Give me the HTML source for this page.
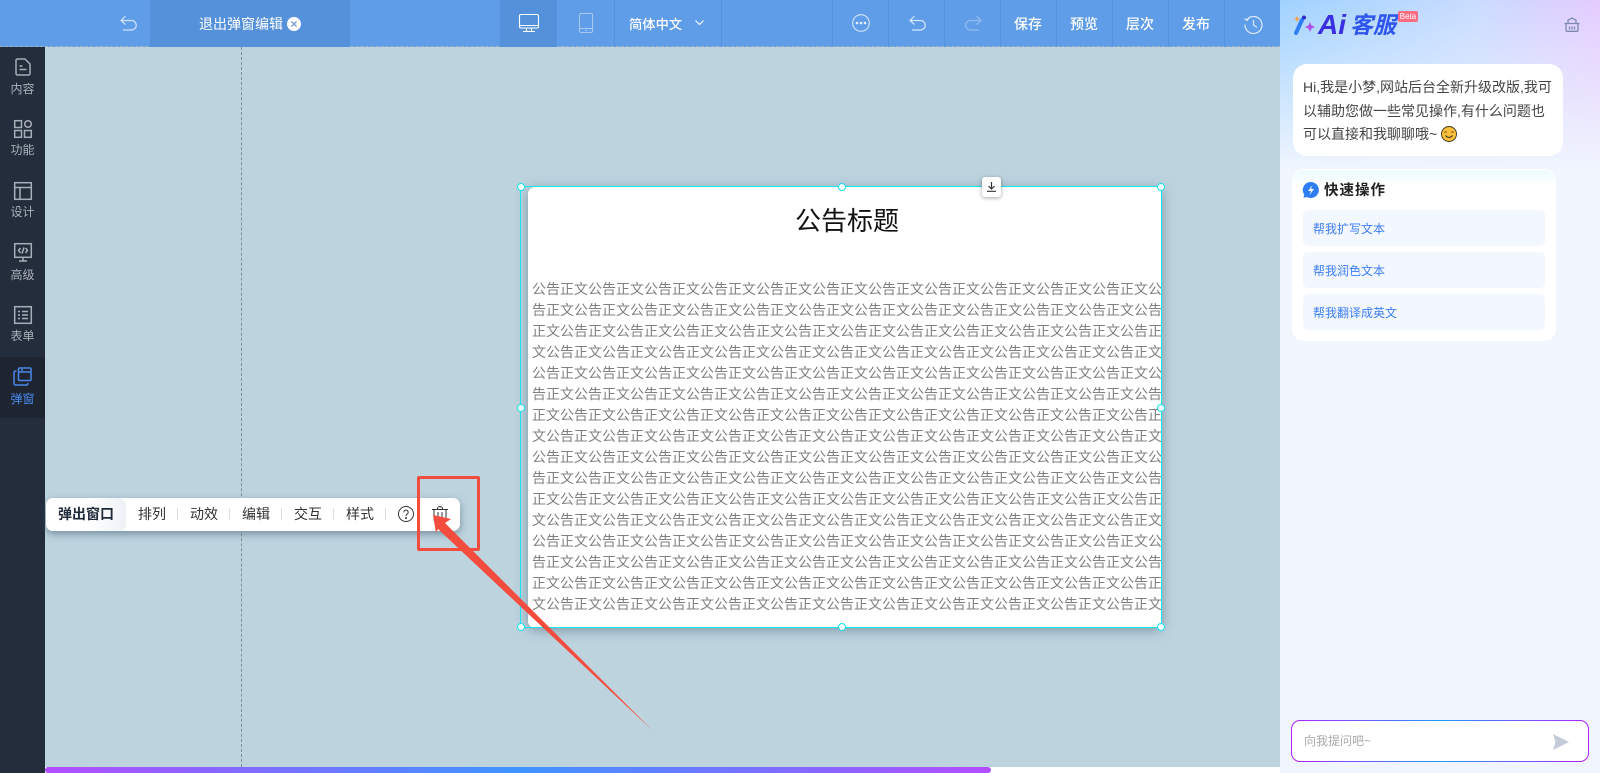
<!DOCTYPE html>
<html lang="zh"><head><meta charset="utf-8"><title>退出弹窗编辑</title>
<style>
*{box-sizing:border-box;margin:0;padding:0}
html,body{width:1600px;height:773px;overflow:hidden;background:#fff;font-family:"Liberation Sans","Noto Sans CJK SC",sans-serif}
.a{position:absolute}
.t{position:absolute;white-space:nowrap;text-align:center}
svg{position:absolute;overflow:visible}
#top{left:0;top:0;width:1280px;height:47px;background:#5f9de9}
.sep{position:absolute;top:0;width:1px;height:47px;background:#5592de}
.tb{top:16px;height:17px;line-height:17px;color:#fff;font-size:14px;width:56px;font-weight:500}
.side{color:#aab1ba;font-size:12px;left:0;width:45px;height:14px;line-height:14px}
.tool{font-size:14px;color:#333;top:504px;height:20px;line-height:20px;width:40px}
.ts{position:absolute;top:508px;width:1px;height:12px;background:#ddd}
.h{position:absolute;width:8px;height:8px;border-radius:50%;background:#fff;border:1px solid #16e0ee}
#body div{height:21px;line-height:21px;white-space:nowrap}
.qb{position:absolute;left:1303px;width:242px;height:36px;background:#f3f7fe;border-radius:5px;color:#3d7ef5;font-size:12px;line-height:38px;padding-left:10px}
</style></head><body>
<div class="a" style="left:0;top:0;width:1600px;height:773px;overflow:hidden">

<!-- canvas -->
<div class="a" style="left:45px;top:47px;width:1235px;height:720px;background:#bdd4df"></div>
<div class="a" style="left:241px;top:47px;width:0;height:720px;border-left:1px dashed #7d8f98"></div>
<div class="a" style="left:45px;top:767px;width:1235px;height:6px;background:#fff"></div>
<div class="a" style="left:45px;top:767px;width:946px;height:6px;border-radius:3px;background:linear-gradient(90deg,#b34dff,#3d94ff 50%,#b34dff)"></div>

<!-- top bar -->
<div class="a" id="top"></div>
<div class="a" style="left:0;top:46px;width:1280px;height:0;border-top:1px dashed #9fb2c0"></div>
<div class="a" style="left:150px;top:0;width:200px;height:47px;background:#5591db"></div>
<div class="a" style="left:500px;top:0;width:57px;height:47px;background:#5591db"></div>
<div class="sep" style="left:614px"></div><div class="sep" style="left:721px"></div><div class="sep" style="left:832px"></div>
<div class="sep" style="left:888px"></div><div class="sep" style="left:944px"></div><div class="sep" style="left:1000px"></div><div class="sep" style="left:1056px"></div><div class="sep" style="left:1112px"></div><div class="sep" style="left:1168px"></div><div class="sep" style="left:1224px"></div>

<svg style="left:120px;top:15px" width="17" height="17" viewBox="0 0 17 17" fill="none" stroke="#cfe2fa" stroke-width="1.2"><path d="M5.500 1 1 5.500l4.500 4M1 5.500h10.500a4.500 4.500 0 0 1 0 9.500H3"/></svg>
<div class="t" style="left:199px;top:15px;width:84px;height:19px;line-height:19px;color:#fff;font-size:14px">退出弹窗编辑</div>
<svg style="left:287px;top:17px" width="14" height="14" viewBox="0 0 14 14"><circle cx="7" cy="7" r="7" fill="#fff"/><path d="M4.500 4.500l5 5m0-5-5 5" stroke="#8aa9d6" stroke-width="1.600"/></svg>

<svg style="left:519px;top:14px" width="20" height="19" viewBox="0 0 20 19" fill="none" stroke="#fff" stroke-width="1.100"><rect x=".5" y=".5" width="19" height="13.500" rx="1.500"/><path d="M.5 11.500h19M7.500 14v3M12.500 14v3M4 17.500h12"/></svg>
<svg style="left:579px;top:13px" width="14" height="20" viewBox="0 0 14 20" fill="none" stroke="#a9c9f2" stroke-width="1"><rect x=".5" y=".5" width="13" height="19" rx="1.500"/><path d="M.5 15.500h13M6 17.500h2"/></svg>
<div class="t" style="left:629px;top:15px;width:53px;height:19px;line-height:19px;color:#fff;font-size:13.300px;font-weight:500">简体中文</div>
<svg style="left:695px;top:20px" width="9" height="6" viewBox="0 0 9 6" fill="none" stroke="#fff" stroke-width="1"><path d="M.5.500l4 4 4-4"/></svg>
<svg style="left:852px;top:14px" width="18" height="18" viewBox="0 0 18 18" fill="none"><circle cx="9" cy="9" r="8.300" stroke="#d5e5fa" stroke-width="1.100"/><circle cx="5" cy="9" r="1.300" fill="#e6f0fc"/><circle cx="9" cy="9" r="1.300" fill="#e6f0fc"/><circle cx="13" cy="9" r="1.300" fill="#e6f0fc"/></svg>
<svg style="left:909px;top:15px" width="17" height="17" viewBox="0 0 17 17" fill="none" stroke="#d5e5fa" stroke-width="1.200"><path d="M5.500 1 1 5.500l4.500 4M1 5.500h10.500a4.500 4.500 0 0 1 0 9.500H3"/></svg>
<svg style="left:965px;top:15px" width="17" height="17" viewBox="0 0 17 17" fill="none" stroke="#93bcee" stroke-width="1.200"><path d="M11.500 1 16 5.500l-4.500 4M16 5.500H5.500a4.500 4.500 0 0 0 0 9.500H14"/></svg>
<div class="t tb" style="left:1000px">保存</div><div class="t tb" style="left:1056px">预览</div><div class="t tb" style="left:1112px">层次</div><div class="t tb" style="left:1168px">发布</div>
<svg style="left:1244px;top:15px" width="19" height="19" viewBox="0 0 19 19" fill="none" stroke="#dfeafa" stroke-width="1.200"><path d="M3 4.500A8.500 8.500 0 1 1 1 9.500M.5 3.500 3 5.500l2-2.500M9.500 5v5l3.500 2.500"/></svg>

<!-- sidebar -->
<div class="a" style="left:0;top:47px;width:45px;height:726px;background:#232d3b"></div>
<div class="a" style="left:0;top:357px;width:45px;height:61px;background:#1e2531"></div>
<svg style="left:15px;top:58px" width="16" height="18" viewBox="0 0 16 18" fill="none" stroke="#a7aeb8" stroke-width="1.500"><path d="M1 2.500A1.500 1.500 0 0 1 2.500 1H10l5 5v9.500a1.500 1.500 0 0 1-1.500 1.500h-11A1.500 1.500 0 0 1 1 15.500zM4.500 8h3M4.500 11.500h7"/></svg>
<div class="t side" style="top:82px">内容</div>
<svg style="left:14px;top:120px" width="18" height="18" viewBox="0 0 18 18" fill="none" stroke="#a7aeb8" stroke-width="1.500"><rect x=".7" y=".7" width="6.800" height="6.800"/><circle cx="14" cy="4" r="3.300"/><rect x=".7" y="10.500" width="6.800" height="6.800"/><rect x="10.500" y="10.500" width="6.800" height="6.800"/></svg>
<div class="t side" style="top:143px">功能</div>
<svg style="left:14px;top:182px" width="18" height="18" viewBox="0 0 18 18" fill="none" stroke="#a7aeb8" stroke-width="1.500"><rect x=".7" y=".7" width="16.600" height="16.600"/><path d="M.7 5.500h16.600M6 5.500v11.800"/></svg>
<div class="t side" style="top:205px">设计</div>
<svg style="left:14px;top:243px" width="18" height="19" viewBox="0 0 18 19" fill="none" stroke="#a7aeb8" stroke-width="1.500"><rect x=".7" y=".7" width="16.600" height="13.600"/><path d="M9 14.500v3M5 18h8M6.500 5l-2 2.500 2 2.500M11.500 5l2 2.500-2 2.500M10 4.500 8 10.500"/></svg>
<div class="t side" style="top:268px">高级</div>
<svg style="left:14px;top:306px" width="18" height="18" viewBox="0 0 18 18" fill="none" stroke="#a7aeb8" stroke-width="1.500"><rect x=".7" y=".7" width="16.600" height="16.600"/><path d="M4 5.500h2M8 5.500h6M4 9h2M8 9h6M4 12.500h2M8 12.500h6"/></svg>
<div class="t side" style="top:329px">表单</div>
<svg style="left:13px;top:367px" width="19" height="19" viewBox="0 0 19 19" fill="none" stroke="#4a86e8" stroke-width="1.500"><rect x="5.500" y="1" width="12.500" height="12.500" rx="1"/><path d="M5.500 5h12.500M8 3h2M3.500 4H2.500A1.500 1.500 0 0 0 1 5.500v11A1.500 1.500 0 0 0 2.500 18h11a1.500 1.500 0 0 0 1.500-1.500V16"/></svg>
<div class="t side" style="top:392px;color:#4a8bf0">弹窗</div>

<!-- floating toolbar -->
<div class="a" style="left:46px;top:498px;width:414px;height:33px;background:#fff;border-radius:7px;box-shadow:0 3px 8px rgba(60,85,105,.55)"></div>
<div class="a" style="left:46px;top:498px;width:80px;height:33px;border-radius:7px;background:linear-gradient(90deg,#fff,#fff 55%,#edf1f6)"></div>
<div class="t tool" style="left:58px;width:56px;font-weight:700;color:#1f2a3a">弹出窗口</div>
<div class="t tool" style="left:132px">排列</div><div class="ts" style="left:177px"></div>
<div class="t tool" style="left:184px">动效</div><div class="ts" style="left:229px"></div>
<div class="t tool" style="left:236px">编辑</div><div class="ts" style="left:281px"></div>
<div class="t tool" style="left:288px">交互</div><div class="ts" style="left:333px"></div>
<div class="t tool" style="left:340px">样式</div><div class="ts" style="left:385px"></div>
<svg style="left:398px;top:506px" width="16" height="16" viewBox="0 0 16 16" fill="none" stroke="#333" stroke-width="1"><circle cx="8" cy="8" r="7.500"/><path d="M5.800 6.300a2.200 2.200 0 1 1 3.400 1.800C8.400 8.700 8 9 8 10"/><circle cx="8" cy="12" r=".5" fill="#333"/></svg>
<svg style="left:432px;top:506px" width="16" height="17" viewBox="0 0 16 17" fill="none" stroke="#333" stroke-width="1"><path d="M0 3.500h16M5.500 3.500V2.500a2.500 2 0 0 1 5 0v1M2 3.500v10a1.500 1.500 0 0 0 1.500 1.500h9a1.500 1.500 0 0 0 1.500-1.500v-10M6 6v6M10 6v6"/></svg>

<!-- popup -->
<div class="a" style="left:528px;top:187px;width:634px;height:441px;background:#fff;border-radius:7px;box-shadow:0 2px 12px rgba(60,85,105,.5);overflow:hidden">
 <div class="t" style="left:267px;top:16px;width:104px;height:36px;line-height:36px;font-size:26px;color:#111">公告标题</div>
 <div class="a" id="body" style="left:4px;top:92px;width:630px;height:336px;overflow:hidden;font-size:14px;color:#808080">
<div>公告正文公告正文公告正文公告正文公告正文公告正文公告正文公告正文公告正文公告正文公告正文公</div>
<div>告正文公告正文公告正文公告正文公告正文公告正文公告正文公告正文公告正文公告正文公告正文公告</div>
<div>正文公告正文公告正文公告正文公告正文公告正文公告正文公告正文公告正文公告正文公告正文公告正</div>
<div>文公告正文公告正文公告正文公告正文公告正文公告正文公告正文公告正文公告正文公告正文公告正文</div>
<div>公告正文公告正文公告正文公告正文公告正文公告正文公告正文公告正文公告正文公告正文公告正文公</div>
<div>告正文公告正文公告正文公告正文公告正文公告正文公告正文公告正文公告正文公告正文公告正文公告</div>
<div>正文公告正文公告正文公告正文公告正文公告正文公告正文公告正文公告正文公告正文公告正文公告正</div>
<div>文公告正文公告正文公告正文公告正文公告正文公告正文公告正文公告正文公告正文公告正文公告正文</div>
<div>公告正文公告正文公告正文公告正文公告正文公告正文公告正文公告正文公告正文公告正文公告正文公</div>
<div>告正文公告正文公告正文公告正文公告正文公告正文公告正文公告正文公告正文公告正文公告正文公告</div>
<div>正文公告正文公告正文公告正文公告正文公告正文公告正文公告正文公告正文公告正文公告正文公告正</div>
<div>文公告正文公告正文公告正文公告正文公告正文公告正文公告正文公告正文公告正文公告正文公告正文</div>
<div>公告正文公告正文公告正文公告正文公告正文公告正文公告正文公告正文公告正文公告正文公告正文公</div>
<div>告正文公告正文公告正文公告正文公告正文公告正文公告正文公告正文公告正文公告正文公告正文公告</div>
<div>正文公告正文公告正文公告正文公告正文公告正文公告正文公告正文公告正文公告正文公告正文公告正</div>
<div>文公告正文公告正文公告正文公告正文公告正文公告正文公告正文公告正文公告正文公告正文公告正文</div>
 </div>
</div>
<div class="a" style="left:520px;top:186px;width:642px;height:442px;border:1px solid #16e6f2"></div>
<div class="h" style="left:517px;top:183px"></div><div class="h" style="left:838px;top:183px"></div><div class="h" style="left:1157px;top:183px"></div>
<div class="h" style="left:517px;top:404px"></div><div class="h" style="left:1157px;top:404px"></div>
<div class="h" style="left:517px;top:623px"></div><div class="h" style="left:838px;top:623px"></div><div class="h" style="left:1157px;top:623px"></div>
<div class="a" style="left:982px;top:177px;width:19px;height:20px;background:#fff;border-radius:3px;box-shadow:0 1px 4px rgba(0,0,0,.35)"></div>
<svg style="left:987px;top:182px" width="9" height="10" viewBox="0 0 9 10" fill="none" stroke="#333" stroke-width="1.200"><path d="M4.500 0v6.500M1.500 4l3 3 3-3M0 9.300h9"/></svg>

<!-- annotation -->
<div class="a" style="left:417px;top:476px;width:63px;height:75px;border:3px solid #f44c3f;border-radius:2px"></div>
<svg style="left:0;top:0" width="1280" height="773"><path d="M433 515 451 519 445 523 653 731 438 529 436 533Z" fill="#f44c3f"/></svg>

<!-- AI panel -->
<div class="a" style="left:1280px;top:0;width:320px;height:773px;background:#f0f5fe"></div>
<div class="a" style="left:1280px;top:0;width:320px;height:170px;background:linear-gradient(180deg,rgba(240,245,254,0),#f0f5fe),linear-gradient(90deg,#9fd2ff,#c8dcff 60%,#e4cbff)"></div>
<svg style="left:1294px;top:15px" width="22" height="21" viewBox="0 0 22 21"><path d="M2 18 8 5" stroke="#2f7df5" stroke-width="4" stroke-linecap="round"/><circle cx="10" cy="2.500" r="2" fill="#2a2ad0"/><path d="M3 1l1 2 2 1-2 1-1 2-1-2-2-1 2-1z" fill="#f5a04a"/><path d="M16 7l1.300 3.200L21 12l-3.700 1.800L16 17l-1.300-3.200L11 12l3.700-1.800z" fill="#b04de8"/></svg>
<div class="t" style="left:1318px;top:11px;width:28px;height:28px;line-height:28px;font-size:28px;font-weight:700;font-style:italic;color:#3a2fe0;text-align:left">Ai</div>
<div class="t" style="left:1350px;top:11px;width:48px;height:28px;line-height:28px;font-size:23px;font-weight:700;font-style:italic;color:#2f56ee;text-align:left">客服</div>
<div class="t" style="left:1398px;top:11px;width:20px;height:11px;line-height:11px;background:#ff6b81;border-radius:2px;color:#fff;font-size:8px">Beta</div>
<svg style="left:1564px;top:17px" width="16" height="15" viewBox="0 0 16 15" fill="none" stroke="#7e88b0" stroke-width="1.300"><path d="M.5 6.500h15M2 6.500v6.500a1.300 1.300 0 0 0 1.300 1.300h9.400a1.300 1.300 0 0 0 1.300-1.300V6.500M4 6.500V3.200L8 1l4 2.200v3.300M5.500 9.500v3M8 9.500v3M10.500 9.500v3"/></svg>

<div class="a" style="left:1293px;top:64px;width:270px;height:92px;background:#fff;border-radius:14px"></div>
<div class="t" style="left:1303px;top:75px;height:24px;line-height:24px;font-size:14px;color:#444;text-align:left">Hi,我是小梦,网站后台全新升级改版,我可</div>
<div class="t" style="left:1303px;top:99px;height:24px;line-height:24px;font-size:14px;color:#444;text-align:left">以辅助您做一些常见操作,有什么问题也</div>
<div class="t" style="left:1303px;top:122px;height:24px;line-height:24px;font-size:14px;color:#444;text-align:left">可以直接和我聊聊哦~</div>
<svg style="left:1441px;top:126px" width="16" height="16" viewBox="0 0 16 16"><circle cx="8" cy="8" r="7.500" fill="#fbbf3a" stroke="#3a3320" stroke-width=".9"/><path d="M3.500 6.500q1-1.300 2 0M10.500 6.500q1-1.300 2 0" fill="none" stroke="#3a3320" stroke-width=".9"/><path d="M4.500 9.500q3.500 4 7 0" fill="none" stroke="#3a3320" stroke-width="1"/></svg>

<div class="a" style="left:1292px;top:169px;width:264px;height:172px;border-radius:12px;background:linear-gradient(180deg,#ecfaff,#fff 16px);border:1px solid #fff"></div>
<svg style="left:1303px;top:182px" width="16" height="16" viewBox="0 0 16 16"><path d="M8 0a8 8 0 1 1-4 15l-3.500.8.700-3.300A8 8 0 0 1 8 0z" fill="#2f7df5"/><path d="M9.500 3 5 9h3l-1.500 4L11 7H8z" fill="#fff"/></svg>
<div class="t" style="left:1324px;top:181px;width:64px;height:20px;line-height:20px;font-size:14.500px;letter-spacing:1px;font-weight:700;color:#222;text-align:left">快速操作</div>
<div class="qb" style="top:210px">帮我扩写文本</div>
<div class="qb" style="top:252px">帮我润色文本</div>
<div class="qb" style="top:294px">帮我翻译成英文</div>

<div class="a" style="left:1291px;top:720px;width:298px;height:42px;border-radius:9px;border:1px solid transparent;background:linear-gradient(#fff,#fff) padding-box,linear-gradient(90deg,#b41fff,#1f9cf5 50%,#b41fff) border-box"></div>
<div class="t" style="left:1304px;top:732px;height:18px;line-height:18px;font-size:12px;color:#aaa;text-align:left">向我提问吧~</div>
<svg style="left:1553px;top:734px" width="16" height="16" viewBox="0 0 16 16"><path d="M0 0 16 8 0 16 2.500 8z" fill="#c3cad8"/></svg>
</div>
</body></html>
